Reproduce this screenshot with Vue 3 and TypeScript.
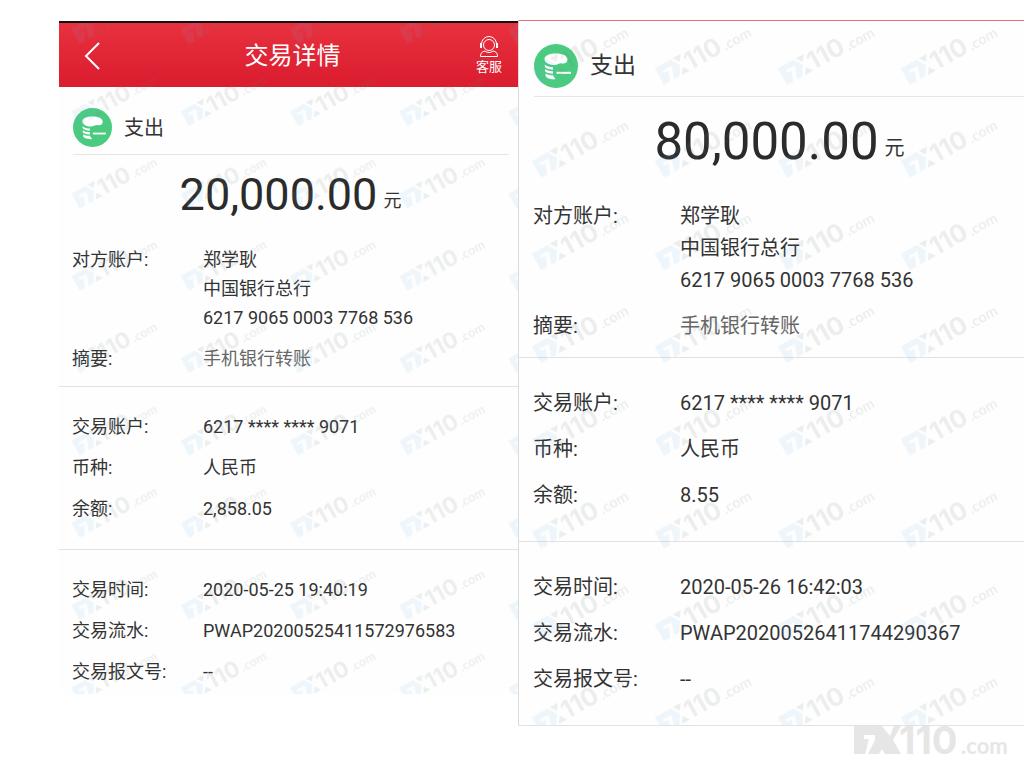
<script setup lang="ts">
interface Row {
  label: string
  lines: string[]
  muted?: boolean
}
interface Receipt {
  id: string
  kind: string
  amount: string
  unit: string
  sections: Row[][]
  tile: string
}

const receipts: Receipt[] = [
  {
    id: 'first',
    kind: '支出',
    amount: '20,000.00',
    unit: '元',
    tile: 'translate(2 -43) scale(0.0888)',
    sections: [
      [
        { label: '对方账户:', lines: ['郑学耿', '中国银行总行', '6217 9065 0003 7768 536'] },
        { label: '摘要:', lines: ['手机银行转账'], muted: true },
      ],
      [
        { label: '交易账户:', lines: ['6217 **** **** 9071'] },
        { label: '币种:', lines: ['人民币'] },
        { label: '余额:', lines: ['2,858.05'] },
      ],
      [
        { label: '交易时间:', lines: ['2020-05-25 19:40:19'] },
        { label: '交易流水:', lines: ['PWAP20200525411572976583'] },
        { label: '交易报文号:', lines: ['--'] },
      ],
    ],
  },
  {
    id: 'second',
    kind: '支出',
    amount: '80,000.00',
    unit: '元',
    tile: 'translate(1 -8) scale(0.1)',
    sections: [
      [
        { label: '对方账户:', lines: ['郑学耿', '中国银行总行', '6217 9065 0003 7768 536'] },
        { label: '摘要:', lines: ['手机银行转账'], muted: true },
      ],
      [
        { label: '交易账户:', lines: ['6217 **** **** 9071'] },
        { label: '币种:', lines: ['人民币'] },
        { label: '余额:', lines: ['8.55'] },
      ],
      [
        { label: '交易时间:', lines: ['2020-05-26 16:42:03'] },
        { label: '交易流水:', lines: ['PWAP20200526411744290367'] },
        { label: '交易报文号:', lines: ['--'] },
      ],
    ],
  },
]
</script>

<template>
  <div class="page">
    <main class="receipts">
      <article v-for="r in receipts" :key="r.id" class="receipt" :class="r.id">
        <header v-if="r.id === 'first'" class="bar">
          <button class="back" type="button" aria-label="返回">
            <svg width="16" height="28" viewBox="0 0 16 28" fill="none" stroke="#fff" stroke-width="2">
              <path d="M15 1 2 14l13 13" />
            </svg>
          </button>
          <h1 class="title">交易详情</h1>
          <button class="service" type="button">
            <svg width="20" height="22" viewBox="0 0 20 22" fill="none" stroke="#fff" stroke-width="1">
              <circle cx="10" cy="9" r="5.5" />
              <path d="M2.500 8a7.500 7.500 0 0 1 15 0M6 15c-3 .5-4.500 2-4.500 5.500h17c0-3.500-1.500-5-4.500-5.500-2.500 2-5.500 2-8 0z" />
              <path d="M2 7v5M18 7v5" stroke-width="2" />
            </svg>
            <span>客服</span>
          </button>
        </header>

        <div class="kind">
          <svg class="coins" viewBox="0 0 44 44">
            <circle cx="22" cy="22" r="22" fill="#4bcb80" />
            <path
              fill="#fff"
              d="M10.500 15c0-3.500 5-5.500 11.500-5.500s11.500 2 11.500 6c0 3.500-3 4.500-6.500 3.700-2.500 0-3.500 1.800-7 1.800-5 0-9.500-2.500-9.500-6zM10.800 20.500c2 1.800 4.700 2.500 8.200 2.700v2.500c-4-.2-7-1.200-8.200-3zM11 25c1.800 1.500 4.500 2.200 8 2.300v2.500c-3.500-.1-6.800-1-8-2.500zM11.500 29.500c1.500 1.200 4.500 1.800 7.500 1.800l2.500 4c-4.500 0-9-.8-10-3.300z"
            />
            <path d="M22.500 28.800H37" stroke="#fff" stroke-width="2" />
          </svg>
          <h2>{{ r.kind }}</h2>
        </div>

        <p class="amount">
          <strong>{{ r.amount }}</strong><span>{{ r.unit }}</span>
        </p>

        <dl v-for="(section, i) in r.sections" :key="i" class="section">
          <div v-for="row in section" :key="row.label" class="row">
            <dt>{{ row.label }}</dt>
            <dd :class="{ muted: row.muted }">
              <span v-for="line in row.lines" :key="line">{{ line }}</span>
            </dd>
          </div>
        </dl>

        <svg class="marks" aria-hidden="true">
          <defs>
            <pattern :id="'tile-' + r.id" width="1230" height="927" patternUnits="userSpaceOnUse" :patternTransform="r.tile">
              <g transform="translate(210 720) rotate(-29) scale(6.6)">
                <path class="tint" d="M0-29H27L36-15 27 0H18L24-20H9V-16H17L11 0H0Z" />
                <path class="ink" d="M31-29H45L38-19ZM38-10 45 0H31Z" />
                <text class="ink digits" x="45" y="0">110</text>
                <text class="ink domain" x="107" y="0">.com</text>
              </g>
            </pattern>
          </defs>
          <rect width="100%" height="100%" :fill="`url(#tile-${r.id})`" />
        </svg>
      </article>
    </main>

    <footer class="brand">
      <svg width="170" height="52" viewBox="0 0 170 52" role="img" aria-label="FX110.com">
        <g transform="translate(0 40)">
          <path d="M0-28H28L36-18 40-28H47L39-14 47 0H31L28-5 25 0H14L21-14V-19H10V-15H15L11 0H0Z" />
          <text class="digits" x="45" y="0">110</text>
          <text class="domain" x="107" y="0">.com</text>
        </g>
      </svg>
    </footer>
  </div>
</template>

<style>
body {
  margin: 0;
  background: #fff;
}
</style>

<style scoped>
.page {
  box-sizing: border-box;
  padding: 20px 0 0 59px;
  font-family: Roboto, "Noto Sans CJK SC", sans-serif;
  color: #333;
}
.receipts {
  display: grid;
  grid-template-columns: 459fr 506fr;
  align-items: start;
}
.receipt {
  position: relative;
  overflow: hidden;
  background: #fefefe;
}
.first {
  --size: 18px;
  --line: 29px;
  --gap: 12px;
  --label: 131px;
  margin-top: 1px;
  border-top: 2px solid #111;
  padding-bottom: 8px;
}
.second {
  --size: 20px;
  --line: 32px;
  --gap: 14px;
  --label: 147px;
  border-top: 1px solid #e8707c;
  border-left: 1px solid #dcdcdc;
  border-bottom: 1px solid #e2e2e2;
}
.bar {
  box-sizing: border-box;
  display: grid;
  grid-template-columns: 66px 1fr 58px;
  align-items: center;
  height: 64px;
  padding-top: 2px;
  background: linear-gradient(#e8313f, #da1c2e);
  color: #fff;
}
.bar button {
  border: 0;
  padding: 0;
  background: none;
  color: inherit;
  font: inherit;
}
.back {
  display: flex;
  justify-content: center;
}
.title {
  margin: 0;
  font-size: 24px;
  line-height: 30px;
  font-weight: 400;
  text-align: center;
}
.service {
  display: flex;
  flex-direction: column;
  align-items: center;
}
.service span {
  font-size: 13px;
  line-height: 18px;
}
.kind {
  display: flex;
  align-items: center;
  gap: 12px;
  margin: 0 9px 0 14px;
  padding: 14px 0 0;
  height: 53px;
  border-bottom: 1px solid #e6e6e6;
}
.coins {
  width: 39px;
  height: 39px;
}
.kind h2 {
  margin: 0;
  font-size: 20px;
  line-height: 28px;
  font-weight: 400;
}
.second .kind {
  margin: 0 0 0 15px;
  height: 61px;
}
.second .coins {
  width: 44px;
  height: 44px;
}
.second h2 {
  font-size: 23px;
}
.amount {
  display: flex;
  justify-content: center;
  align-items: center;
  gap: 6px;
  margin: 0;
  padding: 12px 0 22px 4px;
  font-size: var(--size);
}
.amount span {
  padding-top: 8px;
}
.amount strong {
  font-size: 45px;
  line-height: 56px;
  font-weight: 400;
  color: #2b2b2b;
}
.second .amount {
  padding: 15px 0 28px 16px;
}
.second .amount strong {
  font-size: 51px;
  line-height: 60px;
}
.section {
  display: flex;
  flex-direction: column;
  gap: var(--gap);
  margin: 0;
  padding: 25px 13px 26px;
  font-size: var(--size);
  line-height: var(--line);
}
.second .section {
  padding: 29px 14px 30px;
}
.section + .section {
  border-top: 1px solid #e2e2e2;
}
.first .amount + .section {
  padding-top: 0;
  padding-bottom: 13px;
}
.second .amount + .section {
  padding-top: 0;
  padding-bottom: 15px;
}
.first .section:nth-last-of-type(1) {
  padding-bottom: 0;
}
.row {
  display: grid;
  grid-template-columns: var(--label) 1fr;
}
dt,
dd {
  margin: 0;
  white-space: nowrap;
}
dd span {
  display: block;
}
.muted {
  color: #666;
}
.marks {
  position: absolute;
  inset: 0;
  width: 100%;
  height: 100%;
  pointer-events: none;
}
.ink {
  fill: rgba(110, 125, 125, 0.12);
}
.tint {
  fill: rgba(110, 180, 230, 0.1);
}
.digits {
  font: 700 38px Inter, sans-serif;
}
.domain {
  font: 700 22px Lato, sans-serif;
}
.brand {
  display: flex;
  justify-content: flex-end;
  margin-top: -12px;
}
.brand svg {
  fill: #e6e6e6;
}
</style>
